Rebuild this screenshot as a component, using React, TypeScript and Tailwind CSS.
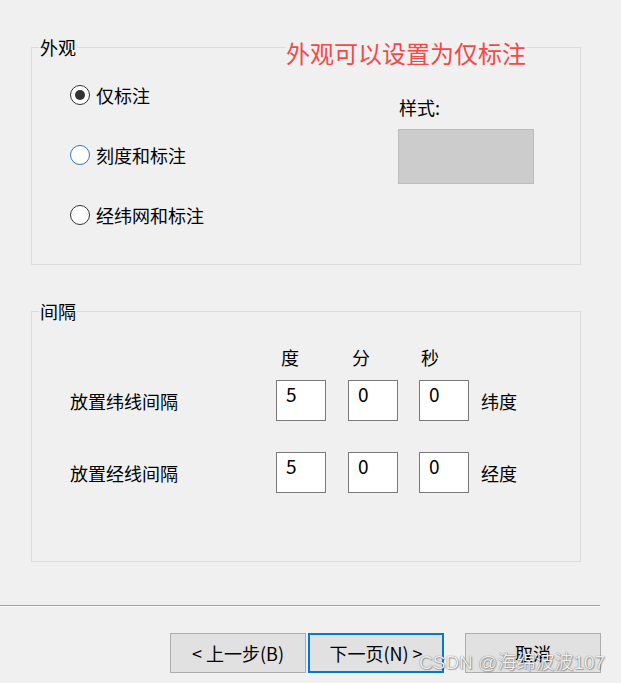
import React from "react";

const font = "font-['Microsoft_YaHei','Noto_Sans_CJK_SC','Noto_Sans',sans-serif]";

function Radio({ label, checked, hover }: { label: string; checked?: boolean; hover?: boolean }) {
  return (
    <div className="flex h-[20px] items-center gap-[6px]">
      <div
        className={
          "flex h-[20px] w-[20px] items-center justify-center rounded-full border bg-white " +
          (hover ? "border-[#2a78c6]" : "border-[#333333]")
        }
      >
        {checked && <div className="h-[10px] w-[10px] rounded-full bg-[#333333]" />}
      </div>
      <span className="text-[18px] leading-[18px] text-black">{label}</span>
    </div>
  );
}

function Box({ value }: { value: string }) {
  return (
    <div className="h-[41px] w-[50px] border border-[#7a7a7a] bg-white pl-[9px] pt-[3px] text-[19px] leading-[20px] text-black">
      {value}
    </div>
  );
}

function Btn({ label, primary }: { label: string; primary?: boolean }) {
  return (
    <div
      className={
        "flex h-[40px] w-[136px] items-center justify-center bg-[#e1e1e1] text-[18px] leading-[18px] text-black " +
        (primary ? "border-2 border-[#0078d7]" : "border border-[#adadad]")
      }
    >
      {label}
    </div>
  );
}

export default function App() {
  return (
    <div className={"relative h-[683px] w-[621px] overflow-hidden bg-[#f0f0f0] pt-[38px] text-black " + font}>
      {/* 外观 group */}
      <fieldset className="ml-[31px] w-[550px] border border-[#dcdcdc]">
        <legend className="ml-[7px] px-[1px] text-[18px] leading-[18px]">外观</legend>
        <div className="flex h-[208px]">
          <div className="flex w-[366px] flex-col gap-[40px] pl-[38px] pt-[29px]">
            <Radio label="仅标注" checked />
            <Radio label="刻度和标注" hover />
            <Radio label="经纬网和标注" />
          </div>
          <div className="pt-[42px]">
            <div className="pl-[1px] text-[18px] leading-[18px]">样式:</div>
            <div className="mt-[13px] h-[55px] w-[136px] border border-[#bcbcbc] bg-[#cccccc]" />
          </div>
        </div>
      </fieldset>

      {/* 间隔 group */}
      <fieldset className="ml-[31px] mt-[37px] w-[550px] border border-[#dcdcdc]">
        <legend className="ml-[7px] px-[1px] text-[18px] leading-[18px]">间隔</legend>
        <div className="h-[241px] pl-[38px] pt-[28px]">
          <div className="flex h-[18px] text-[18px] leading-[18px]">
            <div className="w-[206px]" />
            <div className="w-[50px] pl-[5px]">度</div>
            <div className="ml-[22px] w-[50px] pl-[4px]">分</div>
            <div className="ml-[21px] w-[50px] pl-[2px]">秒</div>
          </div>
          <div className="mt-[14px] flex h-[41px] items-center text-[18px] leading-[18px]">
            <div className="w-[206px]">放置纬线间隔</div>
            <Box value="5" />
            <div className="ml-[22px]">
              <Box value="0" />
            </div>
            <div className="ml-[21px]">
              <Box value="0" />
            </div>
            <div className="ml-[12px]">纬度</div>
          </div>
          <div className="mt-[31px] flex h-[41px] items-center text-[18px] leading-[18px]">
            <div className="w-[206px]">放置经线间隔</div>
            <Box value="5" />
            <div className="ml-[22px]">
              <Box value="0" />
            </div>
            <div className="ml-[21px]">
              <Box value="0" />
            </div>
            <div className="ml-[12px]">经度</div>
          </div>
        </div>
      </fieldset>

      {/* separator */}
      <div className="mt-[43px] h-px w-[600px] bg-[#a0a0a0]" />
      <div className="h-px w-[600px] bg-white" />

      {/* buttons */}
      <div className="mt-[26px] flex pl-[170px]">
        <Btn label="< 上一步(B)" />
        <div className="ml-[2px]">
          <Btn label="下一页(N) >" primary />
        </div>
        <div className="ml-[21px]">
          <Btn label="取消" />
        </div>
      </div>

      {/* annotation */}
      <div className="absolute left-[286px] top-[41px] bg-[#f0f0f0] text-[24px] leading-[24px] text-[#f54848]">
        外观可以设置为仅标注
      </div>

      {/* watermark */}
      <div className="pointer-events-none absolute left-[419px] top-[651px] whitespace-nowrap font-['Liberation_Sans','Noto_Sans_CJK_SC',sans-serif] text-[19px] leading-[24px] text-[#eeeeee] [text-shadow:0_0_1px_rgba(0,0,0,0.6),1px_1px_1px_rgba(0,0,0,0.25)]">
        CSDN @海绵波波107
      </div>
    </div>
  );
}
